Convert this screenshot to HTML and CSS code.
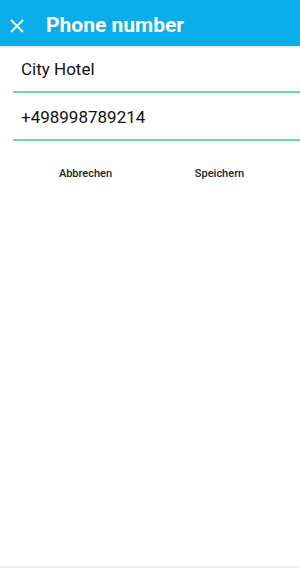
FILE: index.html
```html
<!DOCTYPE html>
<html>
<head>
<meta charset="utf-8">
<link rel="stylesheet" href="styles.css">
</head>
<body>
<div class="screen">
  <header class="bar">
    <svg class="close" width="14" height="14" viewBox="0 0 14 14"><path d="M1 1L13 13M13 1L1 13" stroke="#fff" stroke-width="1.8" fill="none"/></svg>
    <h1 class="title">Phone number</h1>
  </header>
  <main class="form">
    <div class="field">City Hotel</div>
    <div class="field">+498998789214</div>
    <div class="actions">
      <button class="btn btn-cancel">Abbrechen</button>
      <button class="btn btn-save">Speichern</button>
    </div>
  </main>
  <div class="bottom"></div>
</div>
</body>
</html>
```
FILE: styles.css
```css
html, body { margin: 0; padding: 0; background: #fff; }
body { font-family: Roboto, "Noto Sans", sans-serif; }
.screen { width: 300px; height: 568px; display: flex; flex-direction: column; }
.bar {
  height: 46px; box-sizing: border-box; padding-top: 3px;
  background: #0aade9; display: flex; align-items: center;
  box-shadow: 0 1px 2px rgba(0,0,0,0.18); flex: none;
}
.close { margin-left: 10px; margin-top: 2px; }
.title { margin: 0 0 0 22px; color: #fff; font-size: 21px; font-weight: 700; }
.form { margin-left: 13px; flex: 1; }
.field {
  border-bottom: 2px solid #6fdca2; color: #111; font-size: 17px;
  padding-left: 8px; box-sizing: border-box;
}
.field:nth-child(1) { height: 47px; padding-top: 13px; }
.field:nth-child(2) { height: 48px; padding-top: 14px; }
.actions { display: flex; padding-top: 26px; }
.btn {
  background: none; border: none; padding: 0; font-family: Roboto, sans-serif;
  font-size: 11px; font-weight: 500; color: #222; text-align: center;
}
.btn-cancel { width: 145px; }
.btn-save { width: 123px; }
.bottom { height: 2px; background: #eee; flex: none; }
```
